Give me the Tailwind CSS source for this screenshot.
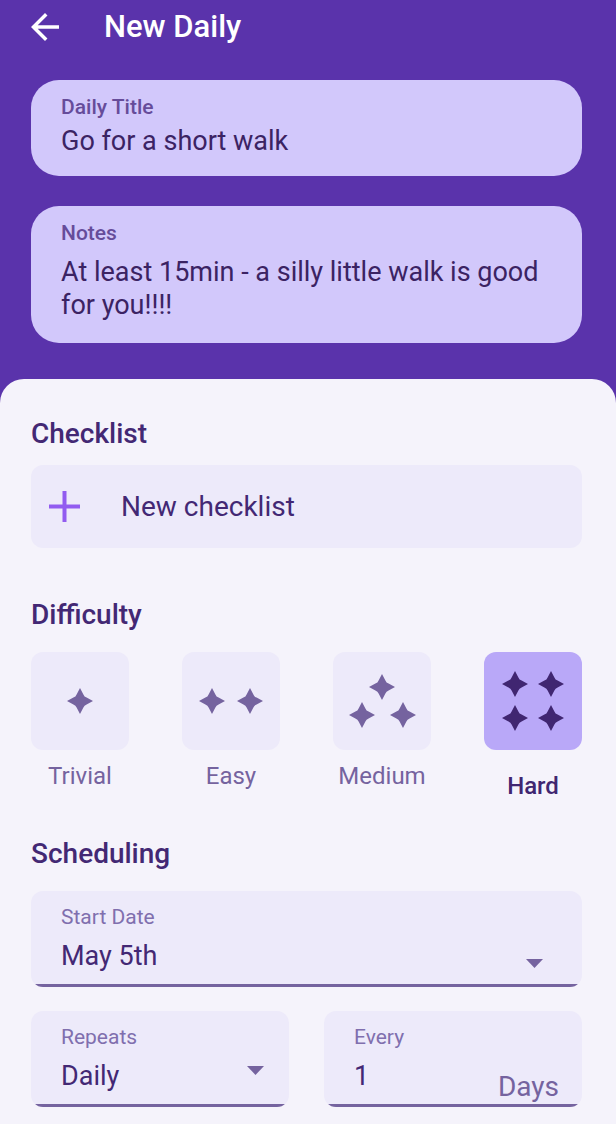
<!DOCTYPE html>
<html lang="en">

<head>
  <meta charset="UTF-8" />
  <meta name="viewport" content="width=device-width, initial-scale=1" />
  <title>New Daily</title>
  <script src="https://cdn.jsdelivr.net/npm/@tailwindcss/browser@4"></script>
</head>

<body class="bg-[#5a33ab] min-h-screen flex flex-col font-['Roboto',sans-serif] text-[28px] leading-8 text-[#432874]">

  <!-- Star used by the difficulty buttons -->
  <svg class="hidden">
    <symbol id="star" viewBox="0 0 26 26">
      <path d="M13 0 L16.4 6.4 Q17.2 8.8 19.6 9.6 L26 13 L19.6 16.4 Q17.2 17.2 16.4 19.6 L13 26 L9.6 19.6 Q8.8 17.2 6.4 16.4 L0 13 L6.4 9.6 Q8.8 8.8 9.6 6.4 Z" fill="currentColor" />
    </symbol>
  </svg>

  <!-- Header -->
  <header class="flex items-center gap-[45px] pl-[31px] pr-[34px] pt-[11px]">
    <button type="button" aria-label="Back" class="text-white">
      <svg class="w-7 h-7" viewBox="4 4 16 16" fill="currentColor">
        <path d="M20 11H7.83l5.59-5.59L12 4l-8 8 8 8 1.41-1.41L7.83 13H20z" />
      </svg>
    </button>
    <h1 class="text-white text-[31px] leading-8 font-medium">New Daily</h1>
  </header>

  <form class="flex flex-col flex-grow" onsubmit="event.preventDefault();">

    <!-- Title and notes -->
    <div class="flex flex-col gap-[30px] pl-[31px] pr-[34px] pt-[37px] pb-9">
      <div class="flex flex-col bg-[#d2c8fb] rounded-[28px] px-[30px] pt-[15px] pb-[19px]">
        <label for="title" class="text-[21px] leading-6 font-medium text-[#664c9a]">Daily Title</label>
        <input id="title" type="text" value="Go for a short walk" class="w-full h-8 mt-1.5 text-[27px] text-[#3b2363] focus:outline-none" />
      </div>
      <div class="flex flex-col bg-[#d2c8fb] rounded-[28px] px-[30px] pt-[15px] pb-[21px]">
        <label for="notes" class="text-[21px] leading-6 font-medium text-[#664c9a]">Notes</label>
        <textarea id="notes" rows="2" class="w-full mt-[11px] text-[27px] leading-[33px] resize-none overflow-hidden text-[#3b2363] focus:outline-none">At least 15min - a silly little walk is good for you!!!!</textarea>
      </div>
    </div>

    <!-- Sheet -->
    <main class="flex-grow bg-[#f5f3fb] rounded-t-3xl pl-[31px] pr-[34px] pt-[39px] pb-4">

      <h2 class="font-medium">Checklist</h2>
      <button type="button" class="w-full min-h-[83px] flex items-center gap-[41px] bg-[#edeafa] rounded-xl mt-[15px] px-[18px] py-4">
        <svg class="w-[31px] h-[31px] text-[#925cf0]" viewBox="0 0 31 31" stroke="currentColor" stroke-width="4">
          <path d="M15.5 0v31M0 15.5h31" />
        </svg>
        <span>New checklist</span>
      </button>

      <fieldset class="mt-[51px]">
        <legend class="font-medium">Difficulty</legend>
        <div class="flex justify-between items-start mt-[21px] text-2xl leading-8 text-[#75639f]">
          <label class="w-[98px] flex flex-col items-center gap-[10px]">
            <input type="radio" name="difficulty" class="sr-only" />
            <span class="w-full h-[98px] flex items-center justify-center bg-[#edeafa] rounded-xl">
              <svg class="w-[26px] h-[26px]"><use href="#star" /></svg>
            </span>
            Trivial
          </label>
          <label class="w-[98px] flex flex-col items-center gap-[10px]">
            <input type="radio" name="difficulty" class="sr-only" />
            <span class="w-full h-[98px] flex items-center justify-center gap-3 bg-[#edeafa] rounded-xl">
              <svg class="w-[26px] h-[26px]"><use href="#star" /></svg>
              <svg class="w-[26px] h-[26px]"><use href="#star" /></svg>
            </span>
            Easy
          </label>
          <label class="w-[98px] flex flex-col items-center gap-[10px]">
            <input type="radio" name="difficulty" class="sr-only" />
            <span class="w-full h-[98px] flex flex-col items-center justify-center gap-0.5 bg-[#edeafa] rounded-xl">
              <svg class="w-[26px] h-[26px]"><use href="#star" /></svg>
              <span class="flex gap-[15px]">
                <svg class="w-[26px] h-[26px]"><use href="#star" /></svg>
                <svg class="w-[26px] h-[26px]"><use href="#star" /></svg>
              </span>
            </span>
            Medium
          </label>
          <label class="w-[98px] flex flex-col items-center gap-5 font-medium text-[#402671]">
            <input type="radio" name="difficulty" class="sr-only" checked />
            <span class="w-full h-[98px] grid grid-cols-[26px_26px] place-content-center gap-x-[10px] gap-y-2 bg-[#b9a8f8] rounded-xl">
              <svg class="w-[26px] h-[26px]"><use href="#star" /></svg>
              <svg class="w-[26px] h-[26px]"><use href="#star" /></svg>
              <svg class="w-[26px] h-[26px]"><use href="#star" /></svg>
              <svg class="w-[26px] h-[26px]"><use href="#star" /></svg>
            </span>
            Hard
          </label>
        </div>
      </fieldset>

      <h2 class="font-medium mt-9">Scheduling</h2>
      <div class="bg-[#edeafa] rounded-xl overflow-hidden mt-[21px]">
        <div class="flex flex-col border-b-3 border-[#75639f] pl-[30px] pr-[39px] pt-[14px] pb-3">
          <label for="start" class="text-[21px] leading-6 text-[#806fae]">Start Date</label>
          <div class="flex mt-[11px]">
            <select id="start" class="appearance-none flex-grow h-8 text-[27px] focus:outline-none">
              <option>May 5th</option>
            </select>
            <svg class="w-[17px] h-[9px] self-end mb-1 text-[#75639f]" viewBox="0 0 17 9" fill="currentColor">
              <path d="M0 0h17L8.5 9z" />
            </svg>
          </div>
        </div>
      </div>

      <div class="grid grid-cols-2 gap-[35px] mt-6">
        <div class="bg-[#edeafa] rounded-xl overflow-hidden">
          <div class="flex flex-col border-b-3 border-[#75639f] pl-[30px] pr-[25px] pt-[14px] pb-3">
            <label for="repeats" class="text-[21px] leading-6 text-[#806fae]">Repeats</label>
            <div class="flex mt-[11px]">
              <select id="repeats" class="appearance-none flex-grow h-8 text-[27px] focus:outline-none">
                <option>Daily</option>
              </select>
              <svg class="w-[17px] h-[9px] mt-1.5 text-[#75639f]" viewBox="0 0 17 9" fill="currentColor">
                <path d="M0 0h17L8.5 9z" />
              </svg>
            </div>
          </div>
        </div>
        <div class="bg-[#edeafa] rounded-xl overflow-hidden">
          <div class="flex items-end border-b-3 border-[#75639f] pl-[30px] pr-[23px]">
            <div class="flex flex-col flex-grow min-w-0 pt-[14px] pb-3">
              <label for="every" class="text-[21px] leading-6 text-[#806fae]">Every</label>
              <input id="every" type="text" value="1" class="w-full h-8 mt-[11px] text-[27px] focus:outline-none" />
            </div>
            <span class="text-[#75639f] pb-px">Days</span>
          </div>
        </div>
      </div>

    </main>
  </form>

</body>

</html>
